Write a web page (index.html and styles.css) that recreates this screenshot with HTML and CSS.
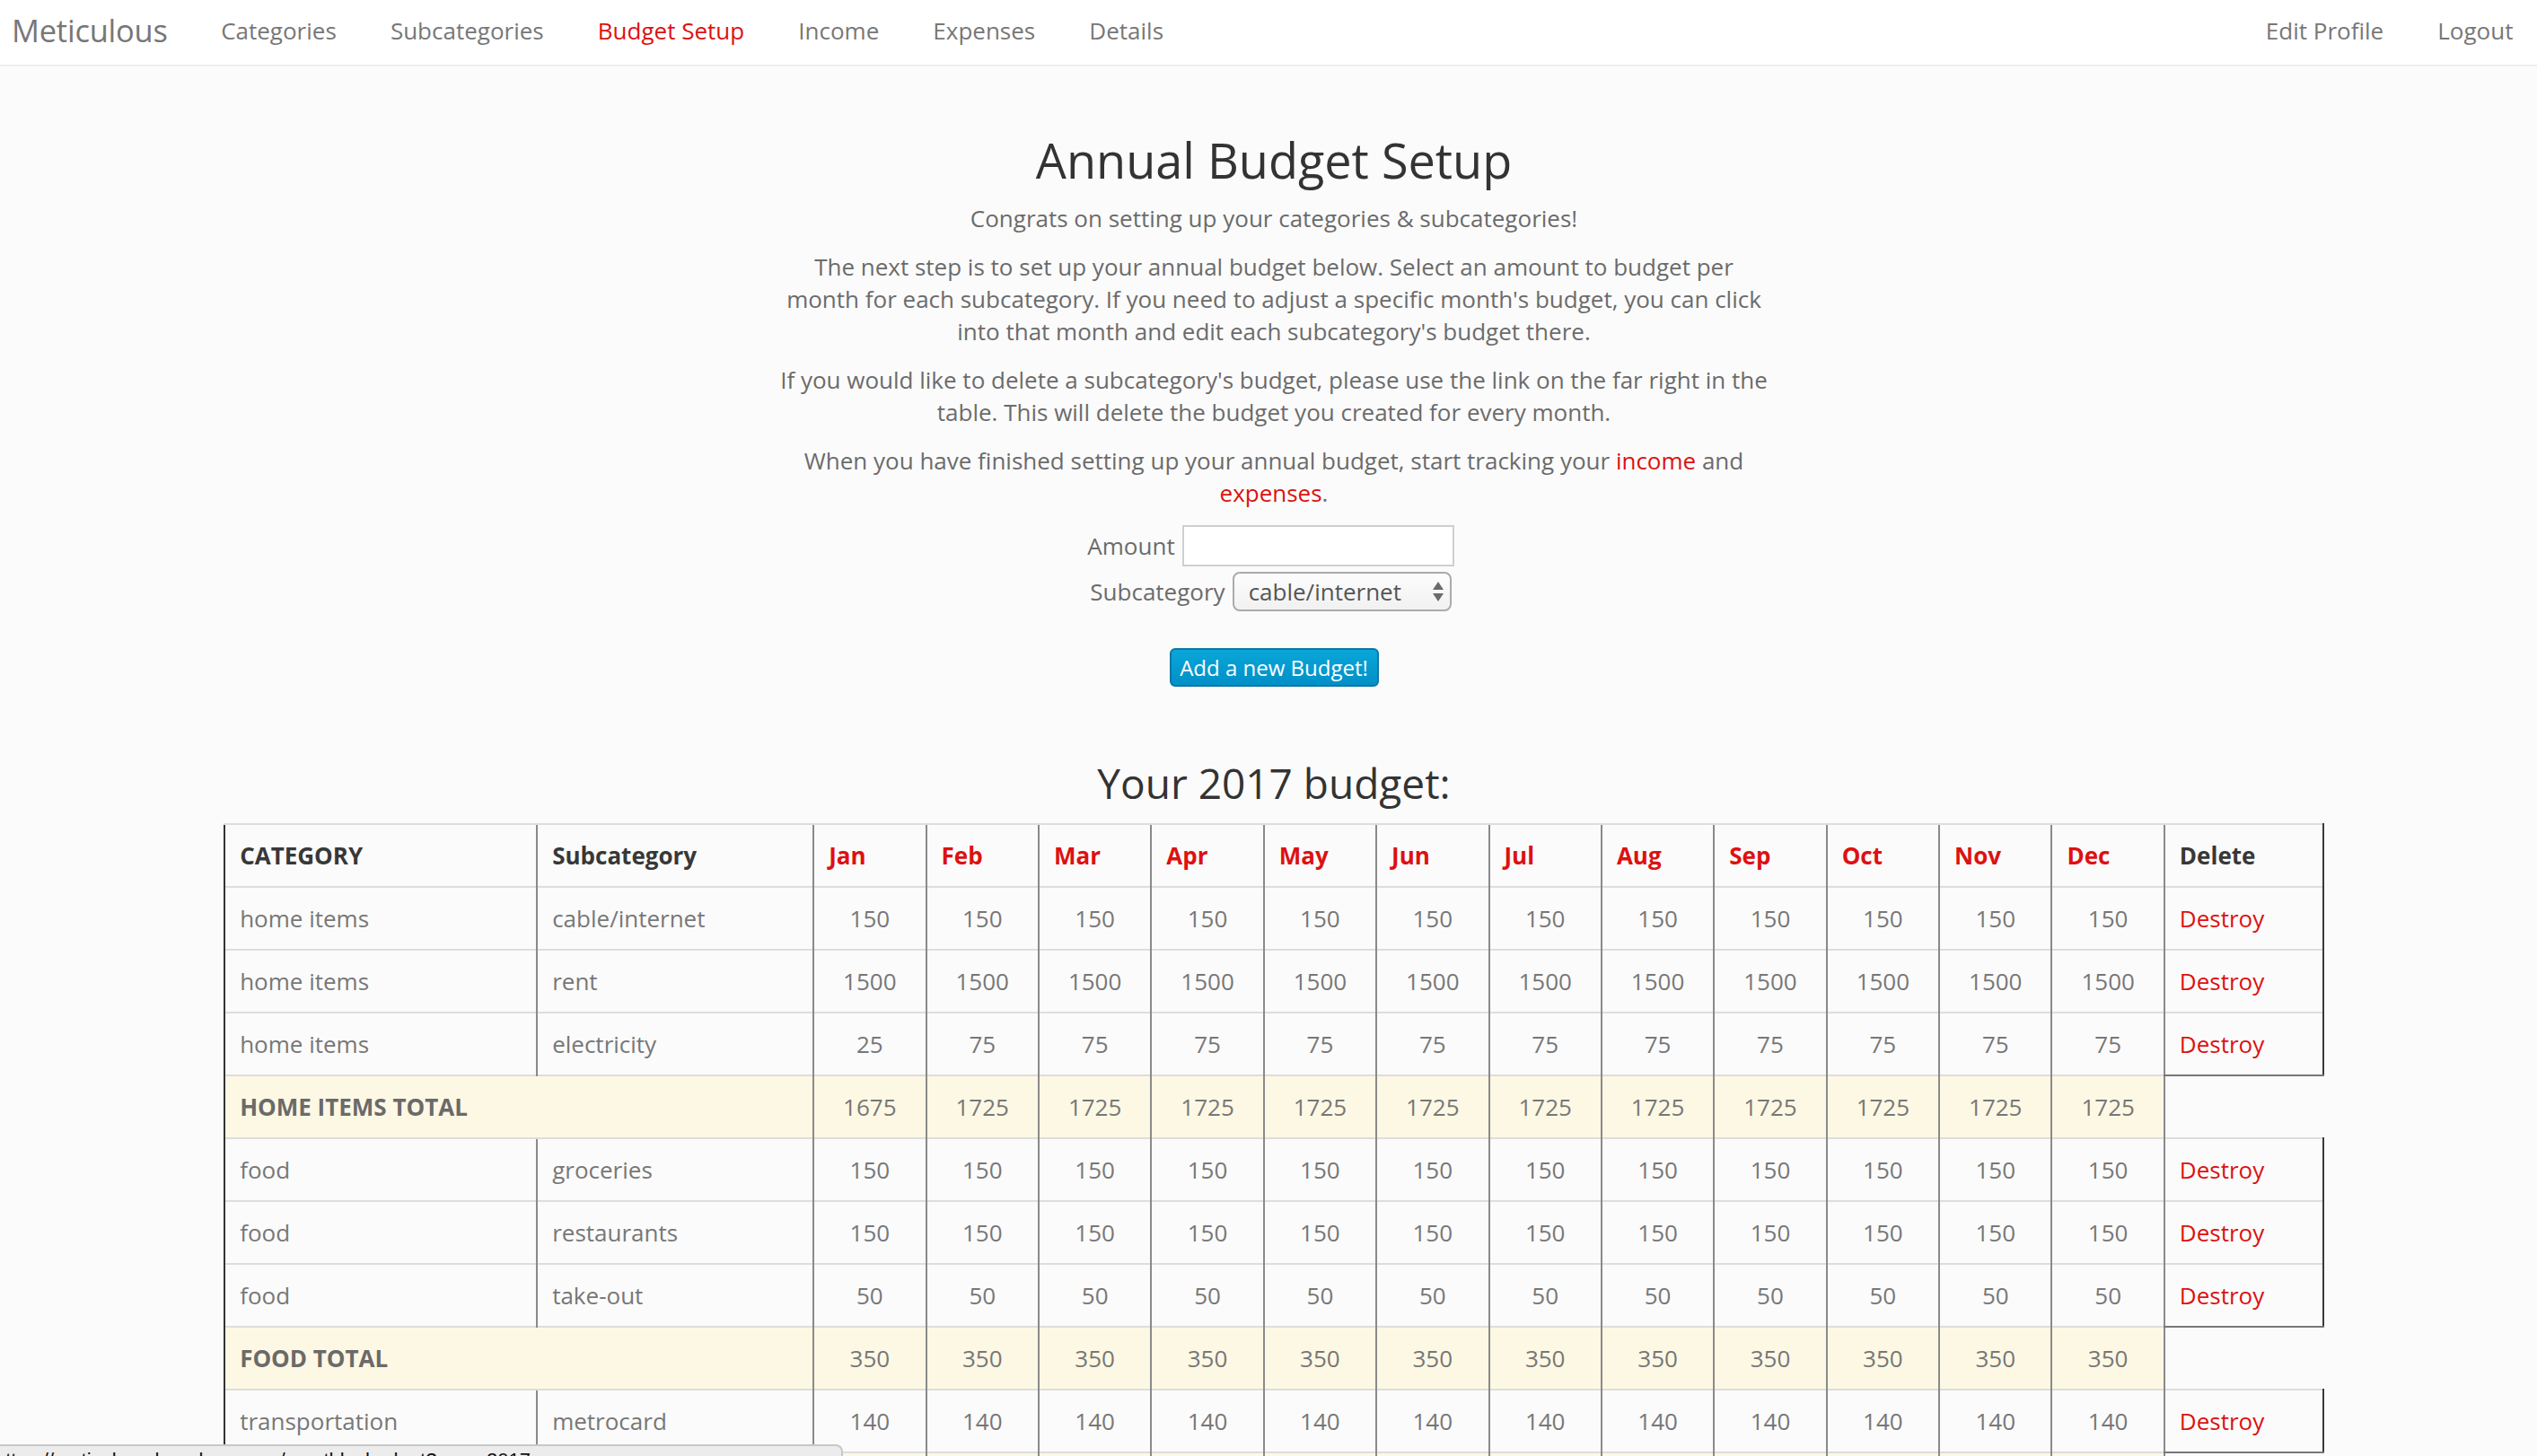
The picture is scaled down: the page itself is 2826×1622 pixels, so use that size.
FILE: index.html
```html
<!DOCTYPE html>
<html lang="en">
<head>
<meta charset="utf-8">
<title>Meticulous - Budget Setup</title>
<link rel="stylesheet" href="styles.css">
</head>
<body>
<nav class="navbar">
  <div class="nav-left">
    <a class="brand" href="#">Meticulous</a>
    <a class="nav-link" href="#">Categories</a>
    <a class="nav-link" href="#">Subcategories</a>
    <a class="nav-link active" href="#">Budget Setup</a>
    <a class="nav-link" href="#">Income</a>
    <a class="nav-link" href="#">Expenses</a>
    <a class="nav-link" href="#">Details</a>
  </div>
  <div class="nav-right">
    <a class="nav-link" href="#">Edit Profile</a>
    <a class="nav-link" href="#">Logout</a>
  </div>
</nav>

<main class="main">
  <h1 class="title">Annual Budget Setup</h1>
  <div class="intro">
    <p class="congrats">Congrats on setting up your categories &amp; subcategories!</p>
    <p>The next step is to set up your annual budget below. Select an amount to budget per month for each subcategory. If you need to adjust a specific month's budget, you can click into that month and edit each subcategory's budget there.</p>
    <p>If you would like to delete a subcategory's budget, please use the link on the far right in the table. This will delete the budget you created for every month.</p>
    <p>When you have finished setting up your annual budget, start tracking your <a class="red-link" href="#">income</a> and <a class="red-link" href="#">expenses</a>.</p>
  </div>

  <form class="budget-form">
    <div class="form-row">
      <label class="form-label" for="amount">Amount</label>
      <input class="amount-input" id="amount" type="text">
    </div>
    <div class="form-row form-row-select">
      <label class="form-label" for="subcat">Subcategory</label>
      <div class="select-wrap">
        <select class="subcat-select" id="subcat">
          <option>cable/internet</option>
          <option>rent</option>
          <option>electricity</option>
          <option>groceries</option>
          <option>restaurants</option>
          <option>take-out</option>
          <option>metrocard</option>
        </select>
      </div>
    </div>
    <div class="form-actions">
      <button class="add-btn" type="button">Add a new Budget!</button>
    </div>
  </form>

  <h2 class="subtitle">Your 2017 budget:</h2>

  <table class="budget-table">
    <colgroup>
      <col class="col-cat"><col class="col-sub">
      <col class="col-m"><col class="col-m"><col class="col-m"><col class="col-m"><col class="col-m"><col class="col-m">
      <col class="col-m"><col class="col-m"><col class="col-m"><col class="col-m"><col class="col-m"><col class="col-m">
      <col class="col-del">
    </colgroup>
    <thead>
      <tr>
        <th class="first">CATEGORY</th><th>Subcategory</th>
        <th class="month">Jan</th><th class="month">Feb</th><th class="month">Mar</th><th class="month">Apr</th>
        <th class="month">May</th><th class="month">Jun</th><th class="month">Jul</th><th class="month">Aug</th>
        <th class="month">Sep</th><th class="month">Oct</th><th class="month">Nov</th><th class="month">Dec</th>
        <th class="del">Delete</th>
      </tr>
    </thead>
    <tbody>
      <tr>
        <td class="first">home items</td><td>cable/internet</td>
        <td class="num">150</td><td class="num">150</td><td class="num">150</td><td class="num">150</td><td class="num">150</td><td class="num">150</td>
        <td class="num">150</td><td class="num">150</td><td class="num">150</td><td class="num">150</td><td class="num">150</td><td class="num">150</td>
        <td class="del"><a href="#">Destroy</a></td>
      </tr>
      <tr>
        <td class="first">home items</td><td>rent</td>
        <td class="num">1500</td><td class="num">1500</td><td class="num">1500</td><td class="num">1500</td><td class="num">1500</td><td class="num">1500</td>
        <td class="num">1500</td><td class="num">1500</td><td class="num">1500</td><td class="num">1500</td><td class="num">1500</td><td class="num">1500</td>
        <td class="del"><a href="#">Destroy</a></td>
      </tr>
      <tr>
        <td class="first">home items</td><td>electricity</td>
        <td class="num">25</td><td class="num">75</td><td class="num">75</td><td class="num">75</td><td class="num">75</td><td class="num">75</td>
        <td class="num">75</td><td class="num">75</td><td class="num">75</td><td class="num">75</td><td class="num">75</td><td class="num">75</td>
        <td class="del last"><a href="#">Destroy</a></td>
      </tr>
      <tr class="total">
        <td class="first" colspan="2">HOME ITEMS TOTAL</td>
        <td class="num">1675</td><td class="num">1725</td><td class="num">1725</td><td class="num">1725</td><td class="num">1725</td><td class="num">1725</td>
        <td class="num">1725</td><td class="num">1725</td><td class="num">1725</td><td class="num">1725</td><td class="num">1725</td><td class="num end">1725</td>
      </tr>
      <tr>
        <td class="first">food</td><td>groceries</td>
        <td class="num">150</td><td class="num">150</td><td class="num">150</td><td class="num">150</td><td class="num">150</td><td class="num">150</td>
        <td class="num">150</td><td class="num">150</td><td class="num">150</td><td class="num">150</td><td class="num">150</td><td class="num">150</td>
        <td class="del"><a href="#">Destroy</a></td>
      </tr>
      <tr>
        <td class="first">food</td><td>restaurants</td>
        <td class="num">150</td><td class="num">150</td><td class="num">150</td><td class="num">150</td><td class="num">150</td><td class="num">150</td>
        <td class="num">150</td><td class="num">150</td><td class="num">150</td><td class="num">150</td><td class="num">150</td><td class="num">150</td>
        <td class="del"><a href="#">Destroy</a></td>
      </tr>
      <tr>
        <td class="first">food</td><td>take-out</td>
        <td class="num">50</td><td class="num">50</td><td class="num">50</td><td class="num">50</td><td class="num">50</td><td class="num">50</td>
        <td class="num">50</td><td class="num">50</td><td class="num">50</td><td class="num">50</td><td class="num">50</td><td class="num">50</td>
        <td class="del last"><a href="#">Destroy</a></td>
      </tr>
      <tr class="total">
        <td class="first" colspan="2">FOOD TOTAL</td>
        <td class="num">350</td><td class="num">350</td><td class="num">350</td><td class="num">350</td><td class="num">350</td><td class="num">350</td>
        <td class="num">350</td><td class="num">350</td><td class="num">350</td><td class="num">350</td><td class="num">350</td><td class="num end">350</td>
      </tr>
      <tr>
        <td class="first">transportation</td><td>metrocard</td>
        <td class="num">140</td><td class="num">140</td><td class="num">140</td><td class="num">140</td><td class="num">140</td><td class="num">140</td>
        <td class="num">140</td><td class="num">140</td><td class="num">140</td><td class="num">140</td><td class="num">140</td><td class="num">140</td>
        <td class="del last"><a href="#">Destroy</a></td>
      </tr>
      <tr class="total">
        <td class="first" colspan="2">TRANSPORTATION TOTAL</td>
        <td class="num">140</td><td class="num">140</td><td class="num">140</td><td class="num">140</td><td class="num">140</td><td class="num">140</td>
        <td class="num">140</td><td class="num">140</td><td class="num">140</td><td class="num">140</td><td class="num">140</td><td class="num end">140</td>
      </tr>
    </tbody>
  </table>
</main>

<div class="status-bar">https://meticulous-hanalway.com/monthly_budget?year=2017</div>
</body>
</html>
```

FILE: styles.css
```css
* { box-sizing: border-box; }

html, body {
  margin: 0;
  padding: 0;
}

body {
  background: #fbfbfb;
  font-family: "Open Sans", "Noto Sans", sans-serif;
  font-size: 26px;
  line-height: 36px;
  color: #6b6b6b;
}

a { text-decoration: none; }

/* ---------- navbar ---------- */
.navbar {
  display: flex;
  justify-content: space-between;
  align-items: stretch;
  height: 74px;
  background: #ffffff;
  border-bottom: 2px solid #eeeeee;
}

.nav-left,
.nav-right {
  display: flex;
  align-items: center;
  padding-bottom: 4px;
}

.nav-right { margin-right: -3.5px; }

.brand {
  font-size: 34.4px;
  color: #777777;
  padding: 0 29.5px 0 13px;
  letter-spacing: -0.2px;
}

.nav-link {
  font-size: 26px;
  color: #777777;
  padding: 0 30.05px;
}

.nav-link.active { color: #dd1111; }

/* ---------- main ---------- */
.main {
  padding-left: 12px;
  text-align: center;
}

.title {
  margin: 72px 0 0;
  font-size: 54px;
  line-height: 64px;
  font-weight: 400;
  color: #333333;
}

.intro {
  width: 1108px;
  margin: 15px auto 0;
}

.intro p {
  margin: 0 0 18px;
}

.red-link { color: #dd1111; }

/* ---------- form ---------- */
.budget-form {
  margin-top: 1px;
  margin-left: -7px;
}

.form-row {
  display: flex;
  justify-content: center;
  align-items: center;
  gap: 8px;
}

.form-row-select { margin-top: 6px; }

.form-label { color: #6b6b6b; }

.amount-input {
  width: 303px;
  height: 46px;
  border: 2px solid #cfcfcf;
  background: #ffffff;
  font: inherit;
  padding: 0 10px;
  outline: none;
}

.select-wrap {
  position: relative;
  width: 244px;
  height: 44px;
}

.subcat-select {
  appearance: none;
  -webkit-appearance: none;
  width: 100%;
  height: 100%;
  border: 2px solid #ababab;
  border-radius: 8px;
  background: linear-gradient(#fdfdfd, #f1f1f1);
  font: inherit;
  color: #555555;
  padding: 0 30px 0 16px;
  outline: none;
}

.select-wrap::before,
.select-wrap::after {
  content: "";
  position: absolute;
  right: 9px;
  width: 0;
  height: 0;
  border-left: 6px solid transparent;
  border-right: 6px solid transparent;
  pointer-events: none;
}

.select-wrap::before {
  top: 11px;
  border-bottom: 9px solid #6b6b6b;
}

.select-wrap::after {
  top: 24px;
  border-top: 9px solid #6b6b6b;
}

.form-actions {
  margin-top: 41px;
  margin-left: 7px;
}

.add-btn {
  height: 43px;
  width: 233px;
  padding: 0;
  border: 2px solid #0a78a6;
  border-radius: 6px;
  background: linear-gradient(#0aa6d8, #0090c8);
  color: #ffffff;
  font-family: "Open Sans", sans-serif;
  font-size: 24px;
  line-height: 39px;
}

.subtitle {
  margin: 80px 0 0;
  font-size: 46px;
  line-height: 54px;
  font-weight: 400;
  color: #333333;
}

/* ---------- table ---------- */
.budget-table {
  margin: 18px auto 0;
  width: 2338px;
  table-layout: fixed;
  border-collapse: collapse;
  text-align: left;
  color: #777777;
}

.col-cat { width: 348px; }
.col-sub { width: 308px; }
.col-m { width: 125.4px; }
.col-del { width: 177px; }

.budget-table th,
.budget-table td {
  padding: 15px 16px;
  line-height: 38px;
  border-top: 2px solid #dddddd;
  border-left: 2px solid #8a8a8a;
  white-space: nowrap;
}

.budget-table th {
  font-weight: 700;
  color: #383838;
}

.budget-table th.month { color: #dd1111; }

.budget-table .first { border-left: 2px solid #333333; }

.budget-table .del { border-right: 2px solid #3a3a3a; }

.budget-table .del.last { border-bottom: 2px solid #777777; }

.budget-table td.num { text-align: center; }

.budget-table td.del a { color: #dd1111; }

.budget-table tr.total td {
  background: #fdf8e4;
}

.budget-table tr.total td.first {
  font-weight: 700;
  color: #6a6a6a;
}

.budget-table tr.total td.end { border-right: 2px solid #8a8a8a; }

/* ---------- browser status bar overlay ---------- */
.status-bar {
  position: fixed;
  left: 0;
  bottom: 0;
  width: 939px;
  height: 13px;
  overflow: hidden;
  background: #ececec;
  border-top: 2px solid #c8c8c8;
  border-right: 2px solid #c8c8c8;
  border-top-right-radius: 8px;
  font-family: "Liberation Sans", Arial, sans-serif;
  font-size: 22px;
  line-height: 26px;
  padding-top: 3px;
  color: #111111;
  text-indent: -6px;
  white-space: nowrap;
}
```
